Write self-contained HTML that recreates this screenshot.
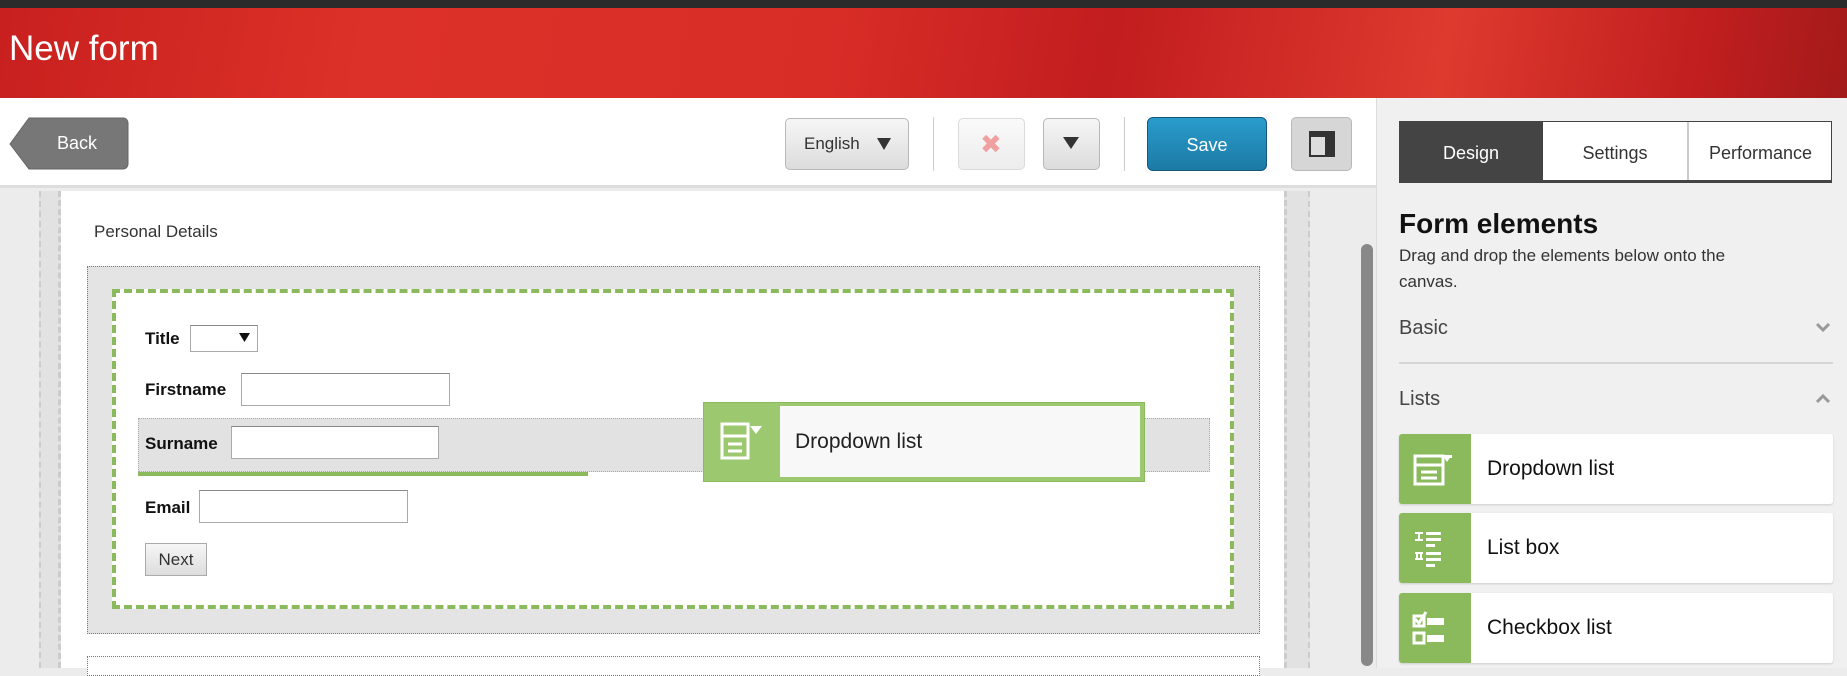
<!DOCTYPE html>
<html><head><meta charset="utf-8"><style>
*{box-sizing:border-box;margin:0;padding:0}
body{width:1847px;height:668px;overflow:hidden;position:relative;background:#ececec;font-family:"Liberation Sans","DejaVu Sans",sans-serif;color:#222}
.a{position:absolute}
.btn{position:absolute;border:1px solid #b8b8b8;border-radius:5px;background:linear-gradient(#f6f6f6,#dcdcdc);}
.lbl{position:absolute;font-weight:bold;font-size:17px;color:#111}
.inp{position:absolute;background:#fff;border:1px solid #aaa;border-top-color:#888}
.card{position:absolute;left:1399px;width:434px;height:70px;background:#fff;border-radius:3px;box-shadow:0 1px 2px rgba(0,0,0,.15)}
.card .ic{position:absolute;left:0;top:0;width:72px;height:70px;background:#8aba5c;border-radius:3px 0 0 3px}
.card .t{position:absolute;left:88px;top:23px;font-size:21px;color:#111}
</style></head><body>
<div class="a" style="left:0;top:0;width:1847px;height:8px;background:#2b2b2b"></div>
<div class="a" style="left:0;top:8px;width:1847px;height:90px;background:linear-gradient(100deg,#c8201f 0%,#dc3128 20%,#d82d27 45%,#c21d1f 60%,#de3a2e 78%,#c01e1f 92%,#a31a1a 100%)"></div>
<div class="a" style="left:9px;top:29px;font-size:35px;color:#fff">New form</div>
<div class="a" style="left:0;top:98px;width:1376px;height:90px;background:#fff;border-bottom:3px solid #ddd"></div>
<svg class="a" style="left:9px;top:117px" width="120" height="53"><path d="M20 1H114a5 5 0 0 1 5 5V47a5 5 0 0 1-5 5H20L1 27Z" fill="#777" stroke="#666"/></svg>
<div class="a" style="left:57px;top:133px;font-size:18px;color:#fff">Back</div>
<div class="btn" style="left:785px;top:118px;width:124px;height:52px"></div>
<div class="a" style="left:804px;top:134px;font-size:17px;color:#333">English</div>
<svg class="a" style="left:876px;top:137px" width="16" height="14"><path d="M1 1H15L8 13Z" fill="#333"/></svg>
<div class="a" style="left:933px;top:117px;width:1px;height:54px;background:#ccc"></div>
<div class="btn" style="left:958px;top:118px;width:67px;height:52px;opacity:.5"></div>
<div class="a" style="left:980px;top:129px;font-size:26px;color:#f0a0a0;font-weight:bold">✖</div>
<div class="btn" style="left:1043px;top:118px;width:57px;height:52px"></div>
<svg class="a" style="left:1062px;top:136px" width="18" height="14"><path d="M1 1H17L9 13Z" fill="#333"/></svg>
<div class="a" style="left:1124px;top:117px;width:1px;height:54px;background:#ccc"></div>
<div class="a" style="left:1147px;top:117px;width:120px;height:54px;background:linear-gradient(#2a9ccc,#1c7aa6);border:1px solid #14587a;border-radius:6px;color:#fff;font-size:18px;text-align:center;line-height:54px">Save</div>
<div class="btn" style="left:1291px;top:117px;width:61px;height:54px;background:#d6d6d6"></div>
<svg class="a" style="left:1309px;top:131px" width="26" height="26"><rect x="1" y="1" width="24" height="24" fill="#ddd" stroke="#333" stroke-width="2"/><rect x="1" y="1" width="24" height="5" fill="#333"/><rect x="16" y="1" width="9" height="24" fill="#333"/></svg>
<!-- canvas -->
<div class="a" style="left:39px;top:191px;width:22px;height:477px;background:#e2e2e2;border-left:2px dashed #ccc;border-right:3px dashed #ccc"></div>
<div class="a" style="left:61px;top:191px;width:1223px;height:477px;background:#fff"></div>
<div class="a" style="left:1284px;top:191px;width:26px;height:477px;background:#e2e2e2;border-left:3px dashed #ccc;border-right:2px dashed #ccc"></div>
<div class="a" style="left:1361px;top:244px;width:12px;height:422px;background:#888;border-radius:6px"></div>
<div class="a" style="left:94px;top:222px;font-size:17px;color:#333">Personal Details</div>
<div class="a" style="left:87px;top:266px;width:1173px;height:368px;background:#e4e4e4;border:1px dotted #777"></div>
<div class="a" style="left:112px;top:289px;width:1122px;height:320px;background:#fff;border:4px dashed #8aba5c"></div>
<div class="lbl" style="left:145px;top:329px">Title</div>
<div class="inp" style="left:190px;top:325px;width:68px;height:27px"></div>
<svg class="a" style="left:239px;top:333px" width="11" height="10"><path d="M0 0H11L5.5 9Z" fill="#111"/></svg>
<div class="lbl" style="left:145px;top:380px">Firstname</div>
<div class="inp" style="left:241px;top:373px;width:209px;height:33px"></div>
<div class="a" style="left:138px;top:418px;width:1072px;height:54px;background:#e2e2e2;border:1px dotted #aaa"></div>
<div class="lbl" style="left:145px;top:434px">Surname</div>
<div class="inp" style="left:231px;top:426px;width:208px;height:33px"></div>
<div class="a" style="left:138px;top:472px;width:450px;height:4px;background:#8aba5c"></div>
<div class="lbl" style="left:145px;top:498px">Email</div>
<div class="inp" style="left:199px;top:490px;width:209px;height:33px"></div>
<div class="a" style="left:145px;top:543px;width:62px;height:33px;background:linear-gradient(#f6f6f6,#ddd);border:1px solid #aaa;font-size:17px;text-align:center;line-height:31px;color:#333">Next</div>
<div class="a" style="left:703px;top:402px;width:442px;height:80px;background:#9cc870;border:1px solid #8aba5c"></div>
<div class="a" style="left:780px;top:406px;width:360px;height:71px;background:#f8f8f8"></div>
<svg class="a" style="left:720px;top:422px" width="44" height="40"><g fill="none" stroke="#fff" stroke-width="3"><rect x="2" y="2" width="26" height="34"/><path d="M2 14H28M8 22H22M8 29H22"/></g><path d="M30 4H42L36 12Z" fill="#fff"/></svg>
<div class="a" style="left:795px;top:430px;font-size:21px;color:#222">Dropdown list</div>
<div class="a" style="left:87px;top:656px;width:1173px;height:20px;border:1px dotted #777;background:#fff"></div>
<!-- right panel -->
<div class="a" style="left:1376px;top:98px;width:471px;height:570px;background:#f0f0f0;border-left:1px solid #ddd"></div>
<div class="a" style="left:1399px;top:121px;width:433px;height:62px;border:1px solid #444;border-bottom:3px solid #444;background:#fff"></div>
<div class="a" style="left:1399px;top:121px;width:144px;height:62px;background:#444;color:#fff;font-size:18px;text-align:center;line-height:64px">Design</div>
<div class="a" style="left:1543px;top:121px;width:144px;height:60px;color:#333;font-size:18px;text-align:center;line-height:64px">Settings</div>
<div class="a" style="left:1687px;top:122px;width:2px;height:58px;background:#ccc"></div>
<div class="a" style="left:1689px;top:121px;width:143px;height:60px;color:#333;font-size:18px;text-align:center;line-height:64px">Performance</div>
<div class="a" style="left:1399px;top:208px;font-size:28px;font-weight:bold;color:#111">Form elements</div>
<div class="a" style="left:1399px;top:243px;width:375px;font-size:17px;line-height:26px;color:#333">Drag and drop the elements below onto the canvas.</div>
<div class="a" style="left:1399px;top:317px;font-size:20px;color:#444">Basic</div>
<svg class="a" style="left:1815px;top:322px" width="16" height="12"><path d="M2 2L8 8L14 2" stroke="#999" stroke-width="3" fill="none"/></svg>
<div class="a" style="left:1399px;top:362px;width:434px;height:2px;background:#d4d4d4"></div>
<div class="a" style="left:1399px;top:388px;font-size:20px;color:#444">Lists</div>
<svg class="a" style="left:1815px;top:392px" width="16" height="12"><path d="M2 10L8 4L14 10" stroke="#999" stroke-width="3" fill="none"/></svg>
<div class="card" style="top:434px"><div class="ic"><svg width="72" height="70"><g fill="none" stroke="#fff" stroke-width="3"><rect x="16" y="22" width="28" height="28"/><path d="M16 31H44M22 38H38M22 44H38"/></g><path d="M44 22H52L48 28Z" fill="#fff"/><rect x="44" y="21" width="9" height="3" fill="#fff"/></svg></div><div class="t">Dropdown list</div></div>
<div class="card" style="top:513px"><div class="ic"><svg width="72" height="70"><g fill="#fff"><rect x="16" y="19" width="8" height="2"/><rect x="19" y="19" width="2" height="9"/><rect x="16" y="26" width="8" height="2"/><rect x="16" y="39" width="8" height="2"/><rect x="17" y="39" width="2" height="8"/><rect x="21" y="39" width="2" height="8"/><rect x="16" y="45" width="8" height="2"/><rect x="27" y="19" width="15" height="3"/><rect x="27" y="25" width="15" height="3"/><rect x="27" y="31" width="9" height="3"/><rect x="27" y="39" width="15" height="3"/><rect x="27" y="45" width="15" height="3"/><rect x="27" y="51" width="9" height="3"/></g></svg></div><div class="t">List box</div></div>
<div class="card" style="top:593px"><div class="ic"><svg width="72" height="70"><g fill="none" stroke="#fff" stroke-width="3"><rect x="15" y="23" width="10" height="10"/><rect x="15" y="40" width="10" height="10"/><path d="M16 26L20 30L27 19"/></g><rect x="28" y="25" width="17" height="7" fill="#fff"/><rect x="28" y="42" width="17" height="7" fill="#fff"/></svg></div><div class="t">Checkbox list</div></div>
</body></html>
